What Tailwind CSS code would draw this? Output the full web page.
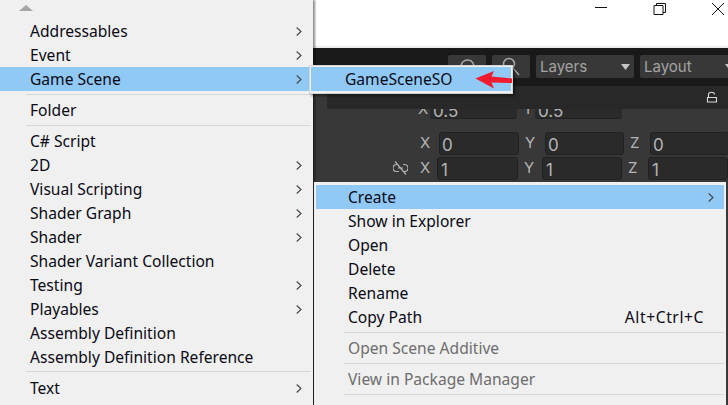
<!DOCTYPE html>
<html><head><meta charset="utf-8"><script src="https://cdn.jsdelivr.net/npm/@tailwindcss/browser@4"></script></head>
<body class="m-0 overflow-hidden">
<div class="relative w-[728px] h-[405px] overflow-hidden bg-white font-['Noto_Sans',sans-serif] text-[15.600px] text-[#0a0a14]">
  <!-- title bar -->
  <div class="h-[46px] bg-white flex justify-end items-start">
    <svg class="w-[140px] h-[20px]" viewBox="0 0 140 20" fill="none" stroke="#111" stroke-width="1">
      <path d="M7 7.500H19"/><path d="M66 5.500H75V14.500H66ZM68.500 5.500V3.500H77.500V12.500H75"/><path d="M124 3L136 15M136 3L124 15"/>
    </svg>
  </div>
  <div class="h-[2px] bg-[#ececec]"></div>
  <!-- toolbar -->
  <div class="h-[38px] bg-[#191919] flex items-start gap-[6px] pl-[448px] pt-[7px] text-[15px] font-['Inter',sans-serif] text-[#a3a3a3]">
    <div class="w-[38px] h-[23px] bg-[#383838] rounded-[2px] shrink-0"><svg viewBox="0 0 38 23" fill="none" stroke="#a8a8a8" stroke-width="1.500"><path d="M13 12a6.500 6.500 0 1 1 3 5"/></svg></div>
    <div class="w-[38px] h-[23px] bg-[#383838] rounded-[2px] shrink-0"><svg viewBox="0 0 38 23" fill="none" stroke="#a8a8a8" stroke-width="1.500"><circle cx="17" cy="9" r="5.500"/><path d="M21 13L27 20"/></svg></div>
    <div class="w-[98px] h-[23px] bg-[#383838] rounded-[2px] shrink-0 flex items-center justify-between pt-[2px] pl-[4px] pr-[4px]"><span>Layers</span><svg class="w-[9px] h-[6px] -translate-y-px" viewBox="0 0 9 6"><path d="M0 0H9L4.500 6Z" fill="#c4c4c4"/></svg></div>
    <div class="w-[98px] h-[23px] bg-[#383838] rounded-[2px] shrink-0 flex items-center justify-between pt-[2px] pl-[4px] pr-[4px]"><span>Layout</span><svg class="w-[9px] h-[6px] -translate-y-px" viewBox="0 0 9 6"><path d="M0 0H9L4.500 6Z" fill="#c4c4c4"/></svg></div>
  </div>
  <!-- inspector -->
  <div class="h-[319px] bg-[#383838] font-['Inter',sans-serif] text-[15px] text-[#b4b4b4]">
    <div class="ml-[327px] h-[23px] bg-[#282828] flex justify-end pr-[10px] pt-[5px]">
      <svg class="w-[12px] h-[12px]" viewBox="0 0 12 12" fill="none" stroke="#d8d8d8" stroke-width="1.100"><path d="M1.500 6.500H10.500V11H1.500ZM2.500 6.500V3.500C2.500 0.500 8.500 0.500 8.500 3.500"/></svg>
    </div>
    <div class="h-[10px] ml-[418px] flex leading-none overflow-hidden">
      <span class="w-[12px] -mt-[8px] shrink-0">X</span>
      <div class="w-[87px] h-[10px] bg-[#2a2a2a] border-b border-[#212121] rounded-b-[3px] pl-[3px] overflow-hidden text-[17px] shrink-0"><span class="block -mt-[6px]">0.5</span></div>
      <span class="w-[18px] -mt-[8px] pl-[6px] shrink-0">Y</span>
      <div class="w-[87px] h-[10px] bg-[#2a2a2a] border-b border-[#212121] rounded-b-[3px] pl-[3px] overflow-hidden text-[17px] shrink-0"><span class="block -mt-[6px]">0.5</span></div>
    </div>
    <div class="mt-[13px] h-[23px] flex items-start pl-[420px] leading-[22px]">
      <span class="w-[19px] shrink-0">X</span><div class="w-[80px] h-[23px] bg-[#2a2a2a] border border-[#212121] rounded-[3px] pl-[2px] text-[17px] leading-[24px] shrink-0">0</div>
      <span class="w-[26px] pl-[6px] shrink-0">Y</span><div class="w-[79px] h-[23px] bg-[#2a2a2a] border border-[#212121] rounded-[3px] pl-[2px] text-[17px] leading-[24px] shrink-0">0</div>
      <span class="w-[26px] pl-[6px] shrink-0">Z</span><div class="w-[79px] h-[23px] bg-[#2a2a2a] border border-[#212121] rounded-[3px] pl-[2px] text-[17px] leading-[24px] shrink-0">0</div>
    </div>
    <div class="mt-[2px] h-[23px] flex items-start pl-[393px] leading-[22px]">
      <svg class="w-[15px] h-[14px] mt-[4px] mr-[12px] shrink-0" viewBox="0 0 15 14" fill="none" stroke="#b4b4b4" stroke-width="1.200"><path d="M5 3.500H3.500a3.500 3.500 0 0 0 0 7H6M10 3.500h1.500a3.500 3.500 0 0 1 0 7H10M5 7H10M2 0.500L13 13.500"/></svg>
      <span class="w-[17px] shrink-0">X</span><div class="w-[81px] h-[23px] bg-[#2a2a2a] border border-[#212121] rounded-[3px] pl-[3px] text-[17px] leading-[24px] shrink-0">1</div>
      <span class="w-[24px] pl-[6px] shrink-0">Y</span><div class="w-[80px] h-[23px] bg-[#2a2a2a] border border-[#212121] rounded-[3px] pl-[3px] text-[17px] leading-[24px] shrink-0">1</div>
      <span class="w-[26px] pl-[6px] shrink-0">Z</span><div class="w-[80px] h-[23px] bg-[#2a2a2a] border border-[#212121] rounded-[3px] pl-[3px] text-[17px] leading-[24px] shrink-0">1</div>
    </div>
  </div>

  <!-- left menu -->
  <div class="absolute left-0 top-0 w-[313px] h-[405px] bg-[#f0f0f0] shadow-[2px_0_2px_rgba(0,0,0,0.45)] pt-[19px]">
    <svg class="absolute left-[19px] top-[5px] w-[14px] h-[6px]" viewBox="0 0 14 6"><path d="M7 0L14 6H0Z" fill="#a6a6a6"/></svg>
    <div class="flex h-6 pt-[2px] items-center justify-between pl-[30px] pr-[11px]">Addressables<svg class="w-[6px] h-[9px] -translate-y-px" viewBox="0 0 6 9" fill="none" stroke="#444" stroke-width="1.100"><path d="M0.700 0.500L5 4.500L0.700 8.500"/></svg></div>
    <div class="flex h-6 pt-[2px] items-center justify-between pl-[30px] pr-[11px]">Event<svg class="w-[6px] h-[9px] -translate-y-px" viewBox="0 0 6 9" fill="none" stroke="#444" stroke-width="1.100"><path d="M0.700 0.500L5 4.500L0.700 8.500"/></svg></div>
    <div class="flex h-6 pt-[2px] items-center justify-between pl-[30px] pr-[11px] bg-[#90c8f6]">Game Scene<svg class="w-[6px] h-[9px] -translate-y-px" viewBox="0 0 6 9" fill="none" stroke="#444" stroke-width="1.100"><path d="M0.700 0.500L5 4.500L0.700 8.500"/></svg></div>
    <div class="h-px bg-[#d7d7d7] ml-[26px] mr-[2px] mt-[3px] mb-[3px]"></div>
    <div class="flex h-6 pt-[2px] items-center justify-between pl-[30px] pr-[11px]">Folder</div>
    <div class="h-px bg-[#d7d7d7] ml-[26px] mr-[2px] mt-[3px] mb-[3px]"></div>
    <div class="flex h-6 pt-[2px] items-center justify-between pl-[30px] pr-[11px]">C# Script</div>
    <div class="flex h-6 pt-[2px] items-center justify-between pl-[30px] pr-[11px]">2D<svg class="w-[6px] h-[9px] -translate-y-px" viewBox="0 0 6 9" fill="none" stroke="#444" stroke-width="1.100"><path d="M0.700 0.500L5 4.500L0.700 8.500"/></svg></div>
    <div class="flex h-6 pt-[2px] items-center justify-between pl-[30px] pr-[11px]">Visual Scripting<svg class="w-[6px] h-[9px] -translate-y-px" viewBox="0 0 6 9" fill="none" stroke="#444" stroke-width="1.100"><path d="M0.700 0.500L5 4.500L0.700 8.500"/></svg></div>
    <div class="flex h-6 pt-[2px] items-center justify-between pl-[30px] pr-[11px]">Shader Graph<svg class="w-[6px] h-[9px] -translate-y-px" viewBox="0 0 6 9" fill="none" stroke="#444" stroke-width="1.100"><path d="M0.700 0.500L5 4.500L0.700 8.500"/></svg></div>
    <div class="flex h-6 pt-[2px] items-center justify-between pl-[30px] pr-[11px]">Shader<svg class="w-[6px] h-[9px] -translate-y-px" viewBox="0 0 6 9" fill="none" stroke="#444" stroke-width="1.100"><path d="M0.700 0.500L5 4.500L0.700 8.500"/></svg></div>
    <div class="flex h-6 pt-[2px] items-center justify-between pl-[30px] pr-[11px]">Shader Variant Collection</div>
    <div class="flex h-6 pt-[2px] items-center justify-between pl-[30px] pr-[11px]">Testing<svg class="w-[6px] h-[9px] -translate-y-px" viewBox="0 0 6 9" fill="none" stroke="#444" stroke-width="1.100"><path d="M0.700 0.500L5 4.500L0.700 8.500"/></svg></div>
    <div class="flex h-6 pt-[2px] items-center justify-between pl-[30px] pr-[11px]">Playables<svg class="w-[6px] h-[9px] -translate-y-px" viewBox="0 0 6 9" fill="none" stroke="#444" stroke-width="1.100"><path d="M0.700 0.500L5 4.500L0.700 8.500"/></svg></div>
    <div class="flex h-6 pt-[2px] items-center justify-between pl-[30px] pr-[11px]">Assembly Definition</div>
    <div class="flex h-6 pt-[2px] items-center justify-between pl-[30px] pr-[11px]">Assembly Definition Reference</div>
    <div class="h-px bg-[#d7d7d7] ml-[26px] mr-[2px] mt-[2px] mb-[4px]"></div>
    <div class="flex h-6 pt-[2px] items-center justify-between pl-[30px] pr-[11px]">Text<svg class="w-[6px] h-[9px] -translate-y-px" viewBox="0 0 6 9" fill="none" stroke="#444" stroke-width="1.100"><path d="M0.700 0.500L5 4.500L0.700 8.500"/></svg></div>
  </div>

  <!-- submenu -->
  <div class="absolute left-[309px] top-[65px] w-[204px] h-[29px] bg-[#f0f0f0] border border-[#d4d4d4] shadow-[2px_2px_2px_rgba(0,0,0,0.4)] p-px">
    <div class="h-6 pt-[2px] bg-[#90c8f6] flex items-center pl-[34px]">GameSceneSO</div>
  </div>
  <svg class="absolute left-[474px] top-[70px] w-[40px] h-[20px]" viewBox="0 0 40 20"><path d="M1.500 8.500L20 1L17.500 6.500L38 8.500V13L17.500 12.500L20 18.500Z" fill="#ee1c2e"/></svg>

  <!-- context menu -->
  <div class="absolute left-[314px] top-[182px] w-[412px] h-[223px] bg-[#f0f0f0] pt-[3px] px-[2px]">
    <div class="flex h-6 pt-[2px] items-center justify-between pl-[32px] pr-[10px] bg-[#90c8f6]">Create<svg class="w-[6px] h-[9px] -translate-y-px" viewBox="0 0 6 9" fill="none" stroke="#444" stroke-width="1.100"><path d="M0.700 0.500L5 4.500L0.700 8.500"/></svg></div>
    <div class="flex h-6 pt-[2px] items-center pl-[32px]">Show in Explorer</div>
    <div class="flex h-6 pt-[2px] items-center pl-[32px]">Open</div>
    <div class="flex h-6 pt-[2px] items-center pl-[32px]">Delete</div>
    <div class="flex h-6 pt-[2px] items-center pl-[32px]">Rename</div>
    <div class="flex h-6 pt-[2px] items-center justify-between pl-[32px] pr-[20px]">Copy Path<span class="tracking-[0.600px]">Alt+Ctrl+C</span></div>
    <div class="h-px bg-[#d7d7d7] ml-[28px] mt-[3px] mb-[3px]"></div>
    <div class="flex h-6 pt-[2px] items-center pl-[32px] text-[#6d6d6d]">Open Scene Additive</div>
    <div class="h-px bg-[#d7d7d7] ml-[28px] mt-[3px] mb-[3px]"></div>
    <div class="flex h-6 pt-[2px] items-center pl-[32px] text-[#6d6d6d]">View in Package Manager</div>
    <div class="h-px bg-[#d7d7d7] ml-[28px] mt-[3px]"></div>
  </div>
</div>
</body></html>
